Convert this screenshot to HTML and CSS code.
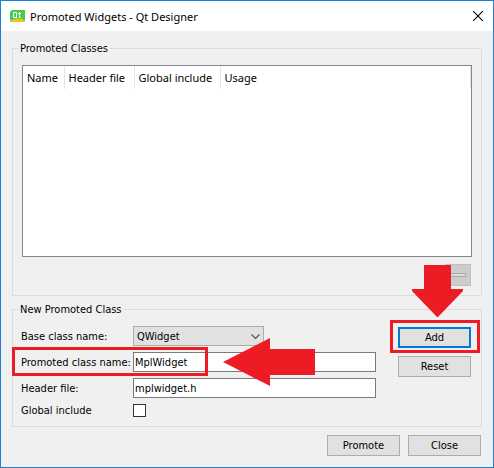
FILE: index.html
```html
<!DOCTYPE html>
<html lang="en">
<head>
<meta charset="utf-8">
<title>Promoted Widgets - Qt Designer</title>
<link rel="stylesheet" href="styles.css">
</head>
<body>
<main class="window">
  <header class="titlebar">
    <svg class="logo" viewBox="0 0 15 13" aria-hidden="true">
      <path d="M2 0h13v10H0V2z" fill="#41cd52"/>
      <path d="M3.500 2.500h3v5h-3zM6 7l1.500 1.500M9.500 2v5.500H11M8 3.500h3" fill="none" stroke="#fff"/>
      <path d="M0 10h15v2H0z" fill="#c9b9a0"/>
      <path d="M3 9h10v3H3z" fill="#ffc400"/>
    </svg>
    <h1 class="title">Promoted Widgets - Qt Designer</h1>
    <button class="dismiss" type="button" aria-label="Close window">
      <svg viewBox="0 0 10 10" aria-hidden="true"><path d="M0 0l10 10M10 0L0 10" stroke="#000" stroke-width="1.100"/></svg>
    </button>
  </header>
  <form class="content">
    <fieldset class="group classes">
      <legend>Promoted Classes</legend>
      <div class="list">
        <table class="table">
          <thead>
            <tr>
              <th class="col-name">Name</th>
              <th class="col-header">Header file</th>
              <th class="col-global">Global include</th>
              <th>Usage</th>
            </tr>
          </thead>
        </table>
      </div>
      <button class="remove" type="button" aria-label="Remove" disabled><span class="minus"></span></button>
    </fieldset>
    <fieldset class="group new-class">
      <legend>New Promoted Class</legend>
      <div class="fields">
        <label for="base">Base class name:</label>
        <div class="combo">
          <select id="base"><option>QWidget</option></select>
          <svg class="chevron" viewBox="0 0 9 6" aria-hidden="true"><path d="M.5.5l4 4 4-4" fill="none" stroke="#555" stroke-width="1.200"/></svg>
        </div>
        <label for="promoted">Promoted class name:</label>
        <div class="promoted">
          <input class="text" id="promoted" type="text" value="MplWidget">
          <span class="mark mark-name"></span>
          <svg class="arrow arrow-left" viewBox="0 0 92 48" aria-hidden="true"><path d="M0 24L47 0v11h45v26H47v11z" fill="#ed1c24"/></svg>
        </div>
        <label for="header">Header file:</label>
        <input class="text" id="header" type="text" value="mplwidget.h">
        <label for="global">Global include</label>
        <input class="check" id="global" type="checkbox">
      </div>
      <div class="actions">
        <div class="add">
          <button class="button default" type="button">Add</button>
          <span class="mark mark-add"></span>
          <svg class="arrow arrow-down" viewBox="0 0 52 52" aria-hidden="true"><path d="M12 0h27v24h12v2L26 52h-1L0 26v-2h12z" fill="#ed1c24"/></svg>
        </div>
        <button class="button" type="button">Reset</button>
      </div>
    </fieldset>
    <div class="footer">
      <button class="button" type="button">Promote</button>
      <button class="button" type="button">Close</button>
    </div>
  </form>
</main>
</body>
</html>
```

FILE: styles.css
```css
* {
  box-sizing: border-box;
}

body {
  margin: 0;
  color: #000;
  font: 11px/15px "DejaVu Sans Condensed", "DejaVu Sans", sans-serif;
}

button,
input,
select {
  margin: 0;
  color: inherit;
  font: inherit;
}

.window {
  display: flex;
  flex-direction: column;
  min-height: 100vh;
  border: 1px solid #1883d7;
  background: #f0f0f0;
}

.titlebar {
  display: flex;
  align-items: center;
  height: 30px;
  padding: 0 10px 0 9px;
  background: #fff;
}

.logo {
  width: 15px;
  height: 13px;
}

.title {
  flex: 1;
  margin: 0 0 0 5px;
  font-family: "Noto Sans", sans-serif;
  font-size: 11px;
  font-weight: 400;
}

.dismiss {
  padding: 0;
  border: 0;
  background: none;
}

.dismiss svg {
  display: block;
  width: 10px;
  height: 10px;
}

.content {
  display: flex;
  flex: 1;
  flex-direction: column;
  padding: 10px 11px 11px;
}

.group {
  min-width: 0;
  margin: 0;
  border: 1px solid #dcdcdc;
  padding: 9px;
}

legend {
  margin-left: -3px;
  padding: 0 2px 0 1px;
}

.classes {
  display: flex;
  flex: 1;
  flex-direction: column;
}

.list {
  flex: 1 0 auto;
  min-height: 192px;
  border: 1px solid #828790;
  background: #fff;
}

.table {
  width: 100%;
  border-collapse: collapse;
  table-layout: fixed;
}

.table th {
  height: 23px;
  padding: 0 0 0 4px;
  border-right: 1px solid #e5e5e5;
  font-family: "Noto Sans", sans-serif;
  font-weight: 400;
  text-align: left;
  white-space: nowrap;
}

.col-name {
  width: 41px;
}

.col-header {
  width: 70px;
}

.col-global {
  width: 86px;
}

.remove {
  display: flex;
  align-items: center;
  justify-content: center;
  align-self: flex-end;
  width: 26px;
  height: 22px;
  margin-top: 7px;
  margin-right: 1px;
  padding: 0;
  border: 1px solid #bfbfbf;
  background: #ccc;
}

.minus {
  width: 16px;
  height: 4px;
  border: 1px solid #aaa;
  background: #ddd;
}

.new-class {
  display: flex;
  justify-content: space-between;
  margin-top: 6px;
  padding-right: 10px;
}

.fields {
  display: grid;
  flex: 1;
  grid-template-columns: 111px 1fr;
  gap: 6px 0;
  align-items: center;
  margin-right: 22px;
}

.fields label {
  margin-left: -1px;
  line-height: 13px;
  white-space: nowrap;
}

.combo {
  position: relative;
  width: 131px;
}

.combo select {
  display: block;
  width: 100%;
  height: 20px;
  padding: 0 3px;
  border: 1px solid #adadad;
  border-radius: 0;
  background: #e1e1e1;
  appearance: none;
}

.chevron {
  position: absolute;
  top: 8px;
  right: 4px;
  width: 9px;
  height: 6px;
  pointer-events: none;
}

.promoted,
.add {
  position: relative;
}

.text {
  display: block;
  width: 100%;
  height: 20px;
  padding: 0 1px;
  border: 1px solid #7a7a7a;
  border-radius: 0;
  background: #fff;
}

.check {
  width: 13px;
  height: 13px;
  border: 1px solid #333;
  background: #fff;
  appearance: none;
}

.actions {
  display: flex;
  flex-direction: column;
  gap: 8px;
  padding-top: 1px;
}

.button {
  display: block;
  width: 73px;
  height: 21px;
  padding: 0;
  border: 1px solid #adadad;
  background: #e1e1e1;
}

.default {
  border: 2px solid #0078d7;
}

.footer {
  display: flex;
  justify-content: flex-end;
  gap: 8px;
  margin-top: 8px;
  padding-right: 1px;
}

.mark,
.arrow {
  position: absolute;
  pointer-events: none;
}

.mark {
  border: 3px solid #ed1c24;
}

.mark-name {
  top: -5px;
  left: -121px;
  width: 196px;
  height: 29px;
}

.mark-add {
  top: -7px;
  left: -8px;
  width: 90px;
  height: 33px;
}

.arrow-left {
  top: -14px;
  left: 90px;
  width: 92px;
  height: 48px;
}

.arrow-down {
  bottom: 31px;
  left: 14px;
  width: 52px;
  height: 52px;
}
```
